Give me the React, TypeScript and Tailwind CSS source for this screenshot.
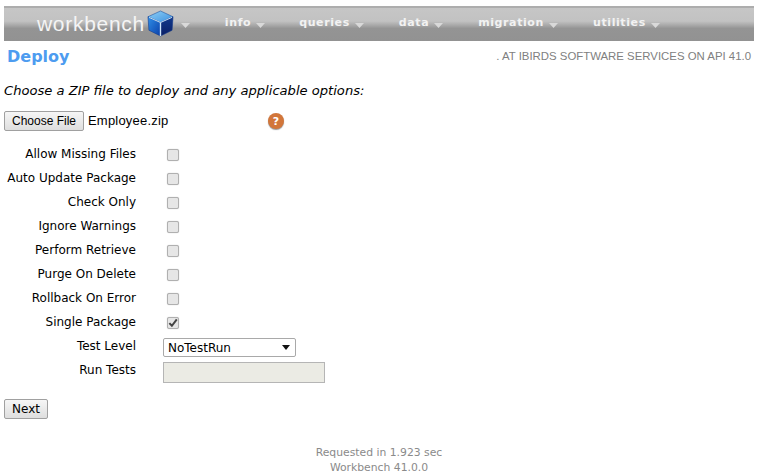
const navItems = [
  { label: "info", gap: "ml-[35px]" },
  { label: "queries", gap: "ml-[34px]" },
  { label: "data", gap: "ml-[35px]" },
  { label: "migration", gap: "ml-[35px]" },
  { label: "utilities", gap: "ml-[35px]" },
];

const options = [
  { label: "Allow Missing Files", checked: false },
  { label: "Auto Update Package", checked: false },
  { label: "Check Only", checked: false },
  { label: "Ignore Warnings", checked: false },
  { label: "Perform Retrieve", checked: false },
  { label: "Purge On Delete", checked: false },
  { label: "Rollback On Error", checked: false },
  { label: "Single Package", checked: true },
];

function Caret({ gap = "ml-[5px]" }: { gap?: string }) {
  return (
    <svg width="9" height="5" viewBox="0 0 9 5" className={`${gap} mt-[4px] shrink-0`}>
      <path d="M0 0H9L4.5 5Z" fill="#d9d9d9" />
    </svg>
  );
}

function Cube() {
  return (
    <svg width="29" height="27" viewBox="0 0 30 28" className="ml-[1px] shrink-0">
      <defs>
        <linearGradient id="cubeTop" x1="0" y1="0" x2="1" y2="1">
          <stop offset="0" stopColor="#8fd0f5" />
          <stop offset="1" stopColor="#3b8fe0" />
        </linearGradient>
        <linearGradient id="cubeLeft" x1="0" y1="0" x2="1" y2="1">
          <stop offset="0" stopColor="#2f8fe8" />
          <stop offset="1" stopColor="#0b3fa8" />
        </linearGradient>
        <linearGradient id="cubeRight" x1="0" y1="0" x2="0" y2="1">
          <stop offset="0" stopColor="#123a8c" />
          <stop offset="1" stopColor="#0a1f66" />
        </linearGradient>
      </defs>
      <path d="M15 1L28 7L15 13L2 7Z" fill="url(#cubeTop)" stroke="#1d4f9e" strokeWidth="0.6" />
      <path d="M2 7L15 13V27L3 21Z" fill="url(#cubeLeft)" stroke="#12388a" strokeWidth="0.6" />
      <path d="M28 7L15 13V27L27 21Z" fill="url(#cubeRight)" stroke="#12388a" strokeWidth="0.6" />
      <path d="M15 13V27" stroke="#cfe6fa" strokeWidth="1.4" />
      <path d="M3 7.6L15 13L27 7.6" stroke="#d8eefc" strokeWidth="0.9" fill="none" />
    </svg>
  );
}

function Checkbox({ checked }: { checked: boolean }) {
  return (
    <span className="flex items-center justify-center size-[12px] rounded-[2px] border border-[#b0b0b0] bg-[#e6e6e6] shadow-[0_0_1px_#bbb]">
      {checked && (
        <svg width="10" height="10" viewBox="0 0 9 9">
          <path d="M1.2 4.6L3.5 7L7.9 1.2" fill="none" stroke="#444" strokeWidth="1.8" />
        </svg>
      )}
    </span>
  );
}

export default function App() {
  return (
    <div className="w-[761px] h-[476px] overflow-hidden bg-white font-['DejaVu_Sans',Verdana,sans-serif] text-[12px] text-black">
      <div className="pl-[4px] pr-[7px] pt-[6px]">
        <nav className="flex items-center h-[35px] pb-[2px] border-t-2 border-[#adadad] bg-[linear-gradient(#c6c6c6_0%,#c2c2c2_40%,#949494_62%,#929292_100%)] pl-[33px]">
          <span className="text-[21px] leading-[24px] tracking-[0.7px] text-[#f4f4f4] font-['Liberation_Sans',sans-serif]">
            workbench
          </span>
          <Cube />
          <Caret gap="ml-[6px]" />
          {navItems.map((item) => (
            <div key={item.label} className={`flex items-center ${item.gap}`}>
              <span className="font-bold text-[11px] tracking-[0.6px] text-[#f2f2f2]">{item.label}</span>
              <Caret />
            </div>
          ))}
        </nav>
        <div className="flex items-center justify-between h-[31px] pl-[3px] pr-[3px]">
          <h1 className="font-bold text-[16px] text-[#4d9cf0]">Deploy</h1>
          <p className="text-[11.4px] text-[#808080] font-['Liberation_Sans',sans-serif]">
            . AT IBIRDS SOFTWARE SERVICES ON API 41.0
          </p>
        </div>
        <p className="mt-[11px] italic text-[13.1px] leading-[16px]">
          Choose a ZIP file to deploy and any applicable options:
        </p>
        <div className="flex items-center mt-[12px] h-[20px]">
          <button
            type="button"
            className="h-[20px] w-[80px] rounded-[2px] border border-[#a0a0a0] bg-[linear-gradient(#f6f6f6,#dedede)] text-[12px] font-['Liberation_Sans',sans-serif]"
          >
            Choose File
          </button>
          <span className="w-[184px] pl-[4px] text-[13px] font-['Liberation_Sans',sans-serif] tracking-[0.2px]">Employee.zip</span>
          <span className="flex items-center justify-center size-[16px] rounded-full bg-[#d2763a] text-white text-[11px] font-bold leading-none shadow-[0_1px_1px_#999]">
            ?
          </span>
        </div>
        <div className="mt-[11px] flex flex-col">
          {options.map((option) => (
            <div key={option.label} className="flex items-center h-[24px]">
              <span className="w-[132px] text-right leading-[24px]">{option.label}</span>
              <span className="ml-[31px] mt-[1px]">
                <Checkbox checked={option.checked} />
              </span>
            </div>
          ))}
          <div className="flex items-center h-[24px]">
            <span className="w-[132px] text-right">Test Level</span>
            <div className="ml-[27px] mt-[3px] flex items-center justify-between w-[133px] h-[19px] rounded-[2px] border border-[#a9a9a9] bg-white pl-[4px] pr-[5px]">
              <span className="text-[12px]">NoTestRun</span>
              <svg width="8" height="5" viewBox="0 0 8 5">
                <path d="M0 0H8L4 5Z" fill="#111" />
              </svg>
            </div>
          </div>
          <div className="flex items-start h-[24px]">
            <span className="w-[132px] text-right leading-[24px]">Run Tests</span>
            <div className="ml-[27px] mt-[4px] w-[162px] h-[21px] border border-[#b5b5b5] bg-[#ebebe4]" />
          </div>
        </div>
        <button
          type="button"
          className="mt-[17px] h-[20px] w-[44px] rounded-[2px] border border-[#a0a0a0] bg-[linear-gradient(#f6f6f6,#dedede)] text-[12px]"
        >
          Next
        </button>
        <div className="mt-[26px] text-center text-[10.8px] leading-[15px] text-[#8a8a8a]">
          <div>Requested in 1.923 sec</div>
          <div>Workbench 41.0.0</div>
        </div>
      </div>
    </div>
  );
}
